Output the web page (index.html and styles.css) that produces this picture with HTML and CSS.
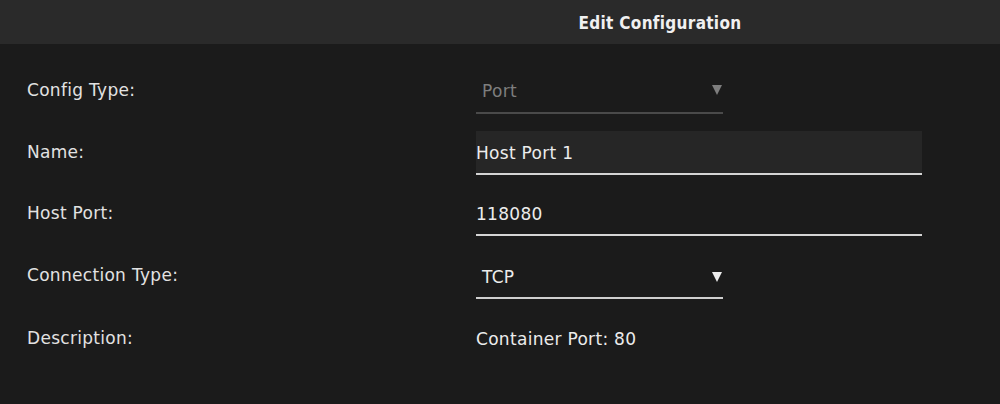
FILE: index.html
```html
<!DOCTYPE html>
<html>
<head>
<meta charset="utf-8">
<link rel="stylesheet" href="styles.css">
</head>
<body>
<div class="modal">
  <header class="header"><h1 class="title">Edit Configuration</h1></header>
  <div class="form">
    <div class="row r1">
      <div class="label">Config Type:</div>
      <div class="select disabled"><span>Port</span><svg class="caret" width="10" height="10" viewBox="0 0 10 10"><polygon points="0,0 10,0 5,10" fill="currentColor"/></svg></div>
    </div>
    <div class="row r2">
      <div class="label">Name:</div>
      <div class="input filled">Host Port 1</div>
    </div>
    <div class="row r3">
      <div class="label">Host Port:</div>
      <div class="input">118080</div>
    </div>
    <div class="row r4">
      <div class="label">Connection Type:</div>
      <div class="select"><span>TCP</span><svg class="caret" width="10" height="10" viewBox="0 0 10 10"><polygon points="0,0 10,0 5,10" fill="currentColor"/></svg></div>
    </div>
    <div class="row r5">
      <div class="label">Description:</div>
      <div class="value">Container Port: 80</div>
    </div>
  </div>
</div>
</body>
</html>
```
FILE: styles.css
```css
html, body {
  margin: 0;
  padding: 0;
  background: #1b1b1b;
}
body {
  width: 1000px;
  height: 404px;
  overflow: hidden;
  font-family: "DejaVu Sans", sans-serif;
  font-size: 17px;
  letter-spacing: 0.3px;
  color: #e4e4e4;
}
.header {
  height: 44px;
  background: #2a2a2a;
  display: flex;
  align-items: center;
  justify-content: center;
  padding-left: 320px;
}
.title {
  margin: 0 0 -2px 0;
  font-family: "DejaVu Sans Condensed", "DejaVu Sans", sans-serif;
  font-stretch: condensed;
  font-size: 17px;
  letter-spacing: 0.3px;
  font-weight: bold;
  color: #f0f0f0;
}
.form {
  padding: 24px 0 0 27px;
  display: flex;
  flex-direction: column;
  gap: 17px;
}
.row {
  display: grid;
  grid-template-columns: 449px auto;
  align-items: center;
}
.label {
  color: #e2e2e2;
  margin-top: -2px;
}
.r5 .label {
  margin-top: 0;
}
.select {
  box-sizing: border-box;
  width: 247px;
  height: 46px;
  padding: 0 1px 0 6px;
  display: flex;
  align-items: center;
  justify-content: space-between;
  border-bottom: 2px solid #cfcfcf;
  color: #ececec;
}
.select span {
  padding-top: 2px;
}
.r4 .select span {
  padding-top: 4px;
}
.select.disabled {
  color: #7e7e7e;
  border-bottom-color: #4a4a4a;
}
.caret {
  margin-top: 0;
}
.r4 .caret {
  margin-top: 3px;
}
.input {
  box-sizing: border-box;
  width: 446px;
  height: 44px;
  padding-top: 2px;
  display: flex;
  align-items: center;
  border-bottom: 2px solid #d4d4d4;
  color: #ececec;
}
.input.filled {
  background: #262626;
}
.value {
  height: 44px;
  padding-top: 2px;
  box-sizing: border-box;
  display: flex;
  align-items: center;
  color: #ececec;
}
```
